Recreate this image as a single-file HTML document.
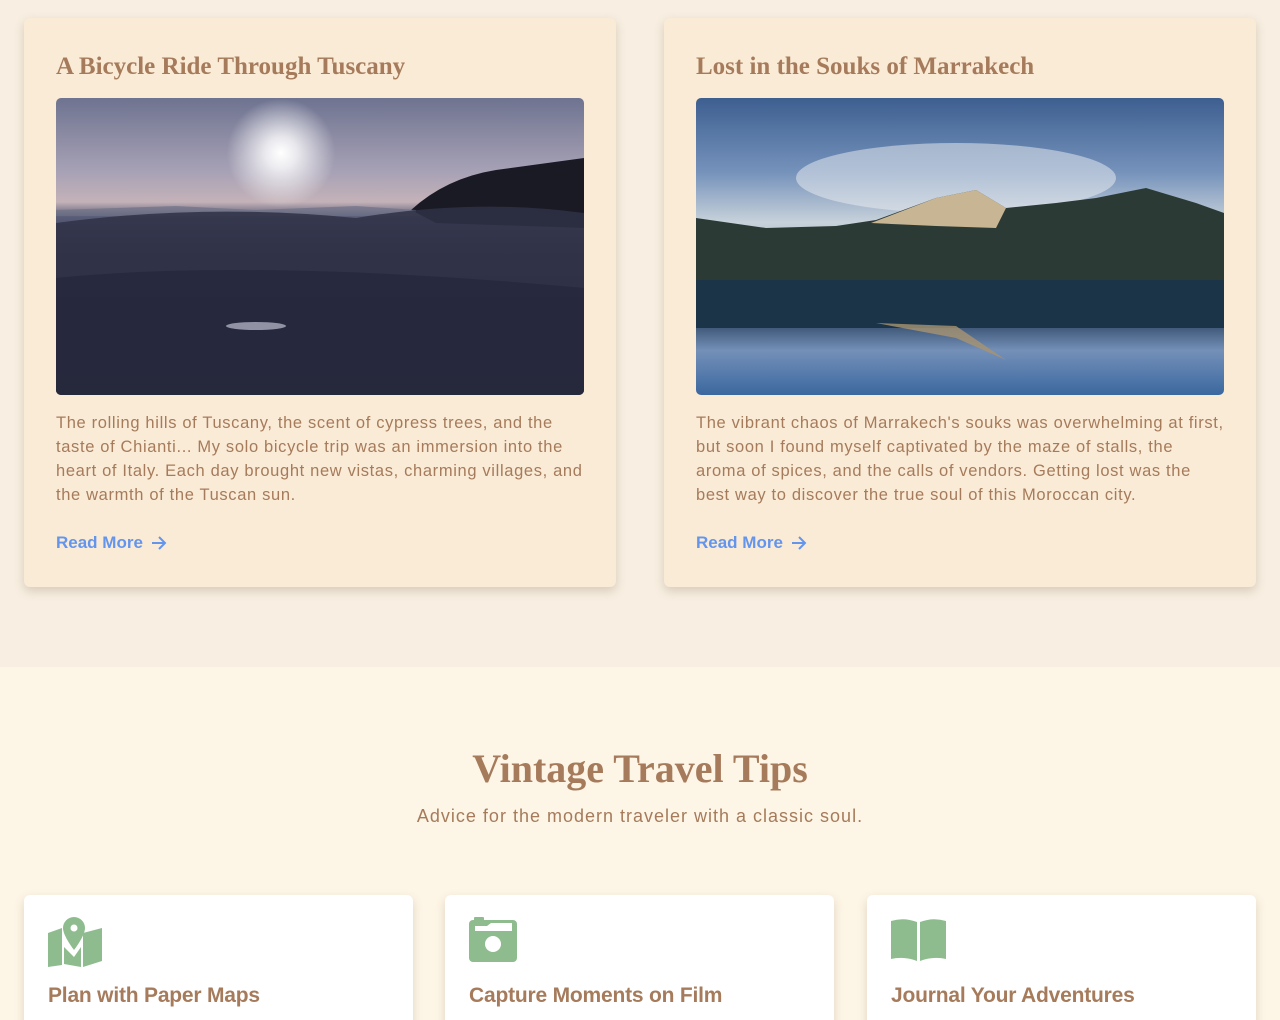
<!DOCTYPE html>
<html><head><meta charset="utf-8"><style>
*{margin:0;padding:0;box-sizing:border-box}
html,body{width:1280px;height:1020px;overflow:hidden}
body{background:#f8efe2;font-family:"Liberation Sans",sans-serif;color:#a67b5b}
.top{height:667px;position:relative}
.card{position:absolute;top:18px;width:592px;height:569px;background:#faebd7;border-radius:6px;box-shadow:0 4px 10px rgba(120,90,60,.25);padding:32px}
.card h2{font-family:"Liberation Serif",serif;font-size:25px;font-weight:bold;line-height:32px;margin-top:1px;color:#a67b5b}
.img{margin-top:15px;width:528px;height:297px;border-radius:5px;overflow:hidden;position:relative}
.card p{margin-top:16px;font-size:16.5px;line-height:24px;letter-spacing:.65px}
.rm{margin-top:26px;color:#6495ed;font-weight:bold;font-size:17px;display:flex;align-items:center;gap:8px}
.bottom{height:353px;background:#fdf5e6;position:relative}
.bottom h1{position:absolute;top:78px;width:100%;text-align:center;font-family:"Liberation Serif",serif;font-size:40px;font-weight:bold}
.bottom .sub{position:absolute;top:139px;width:100%;text-align:center;font-size:18px;letter-spacing:1px}
.tip{position:absolute;top:228px;width:389px;height:140px;background:#fff;border-radius:6px;box-shadow:0 4px 10px rgba(120,90,60,.2);padding:24px}
.tip h3{position:absolute;top:89px;left:24px;font-size:21px;font-weight:bold;letter-spacing:-.2px}
.tip svg{position:absolute;top:22px;left:24px}
</style></head><body>
<div class="top">
<div class="card" style="left:24px">
<h2>A Bicycle Ride Through Tuscany</h2>
<div class="img" style="background:linear-gradient(180deg,#6e7390 0%,#a8a2b6 25%,#c4b2b8 35%,#5a5d78 40%,#3e4058 50%,#262838 75%,#1c1d2a 100%)">
<div style="position:absolute;left:170px;top:0px;width:110px;height:110px;border-radius:50%;background:radial-gradient(circle,#fff 0%,rgba(255,255,255,.8) 20%,rgba(255,255,255,0) 70%)"></div>
<svg width="528" height="297" style="position:absolute;left:0;top:0"><path d="M355 112 Q390 80 440 72 L528 60 L528 130 L380 125 Z" fill="#1a1a24"/><path d="M0 112 L120 108 L200 112 L300 108 L360 112 L360 118 L0 118Z" fill="#6d7088" opacity=".7"/><path d="M0 125 Q150 105 300 120 Q420 100 528 115 L528 297 L0 297Z" fill="#2f3147" opacity=".85"/><path d="M0 180 Q200 160 528 190 L528 297 L0 297Z" fill="#24263a" opacity=".7"/><ellipse cx="200" cy="228" rx="30" ry="4" fill="#d8d8e8" opacity=".6"/></svg>
</div>
<p>The rolling hills of Tuscany, the scent of cypress trees, and the taste of Chianti... My solo bicycle trip was an immersion into the heart of Italy. Each day brought new vistas, charming villages, and the warmth of the Tuscan sun.</p>
<div class="rm">Read More <svg width="16" height="14" viewBox="0 0 16 14"><path d="M1 7h13M8 1l6 6-6 6" stroke="#6495ed" stroke-width="2" fill="none"/></svg></div>
</div>
<div class="card" style="left:664px">
<h2>Lost in the Souks of Marrakech</h2>
<div class="img" style="background:linear-gradient(180deg,#3d5f90 0%,#7592bb 25%,#c8d2da 42%,#9aaabb 55%,#1d3a55 62%,#1e3550 72%,#7490b8 85%,#3b68a0 100%)">
<svg width="528" height="297" style="position:absolute;left:0;top:0"><ellipse cx="260" cy="80" rx="160" ry="35" fill="#eef0f2" opacity=".5"/><path d="M0 120 L70 130 L140 128 L180 122 L240 100 L280 92 L310 110 L360 105 L400 100 L450 90 L500 105 L528 115 L528 182 L0 182Z" fill="#2c3a36"/><path d="M175 125 L240 100 L280 92 L310 110 L300 130 L240 128Z" fill="#c8b594"/><path d="M0 182 L528 182 L528 230 L0 230Z" fill="#1c3448"/><path d="M180 225 L260 228 L310 262 L260 240Z" fill="#a89470" opacity=".8"/></svg>
</div>
<p>The vibrant chaos of Marrakech's souks was overwhelming at first, but soon I found myself captivated by the maze of stalls, the aroma of spices, and the calls of vendors. Getting lost was the best way to discover the true soul of this Moroccan city.</p>
<div class="rm">Read More <svg width="16" height="14" viewBox="0 0 16 14"><path d="M1 7h13M8 1l6 6-6 6" stroke="#6495ed" stroke-width="2" fill="none"/></svg></div>
</div>
</div>
<div class="bottom">
<h1>Vintage Travel Tips</h1>
<div class="sub">Advice for the modern traveler with a classic soul.</div>
<div class="tip" style="left:24px"><svg width="56" height="50" viewBox="0 0 56 50"><path d="M0 16 L14 11 L14 48 L0 50Z M16 30 L16 47 L33 50 L33 30 L26 40Z M35 50 L35 16 L54 11 L54 44Z" fill="#8fbc8f"/><path d="M26 0a11 11 0 0 1 11 11c0 8-11 22-11 22S15 19 15 11A11 11 0 0 1 26 0z" fill="#8fbc8f"/><circle cx="26" cy="11" r="3.5" fill="#fff"/></svg><h3>Plan with Paper Maps</h3></div>
<div class="tip" style="left:445px"><svg width="50" height="46" viewBox="0 0 50 46"><rect x="0" y="3" width="48" height="42" rx="4" fill="#8fbc8f"/><rect x="5" y="0" width="10" height="6" rx="1" fill="#8fbc8f"/><path d="M6 9 L18 9 L22 6 L43 6 L43 14 L6 14Z" fill="#fff"/><circle cx="24" cy="27" r="8" fill="#fff"/></svg><h3>Capture Moments on Film</h3></div>
<div class="tip" style="left:867px"><svg width="56" height="46" viewBox="0 0 56 46"><path d="M0 4 Q13 0 26 5 L26 44 Q13 39 0 42Z M29 5 Q42 0 55 4 L55 42 Q42 39 29 44Z" fill="#8fbc8f"/></svg><h3>Journal Your Adventures</h3></div>
</div>
</body></html>
